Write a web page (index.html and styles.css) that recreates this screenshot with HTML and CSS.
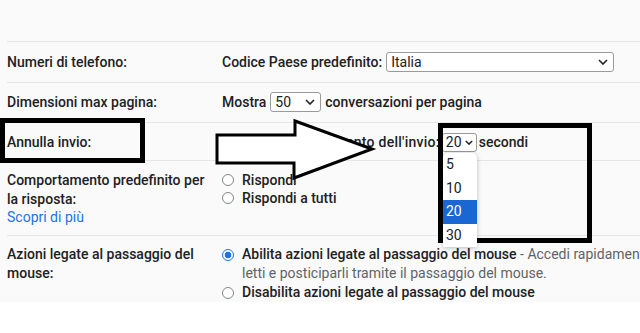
FILE: index.html
```html
<!DOCTYPE html>
<html lang="it">
<head>
<meta charset="UTF-8">
<meta name="viewport" content="width=device-width, initial-scale=1.0">
<title>Impostazioni</title>
<link rel="stylesheet" href="styles.css">
</head>
<body>

<div class="page">
    <div class="settings">
        <div class="row row-1">
            <div class="label">Numeri di telefono:</div>
            <div class="value inline">
                <span class="strong">Codice Paese predefinito:</span>
                <span class="select select-country">Italia
                    <svg class="chevron" width="10" height="6" viewBox="0 0 10 6"><path d="M1 1l4 4 4-4" fill="none" stroke="#202124" stroke-width="1.6"/></svg>
                </span>
            </div>
        </div>

        <div class="row row-2">
            <div class="label">Dimensioni max pagina:</div>
            <div class="value inline">
                <span class="strong">Mostra</span>
                <span class="select select-size">50
                    <svg class="chevron" width="10" height="6" viewBox="0 0 10 6"><path d="M1 1l4 4 4-4" fill="none" stroke="#202124" stroke-width="1.6"/></svg>
                </span>
                <span class="strong">conversazioni per pagina</span>
            </div>
        </div>

        <div class="row row-3">
            <div class="label">Annulla invio:</div>
            <div class="value inline tight">
                <span class="strong wide">Tempo di annullamento dell'invio:</span>
                <span class="select select-delay">20
                    <svg class="chevron" width="8" height="5" viewBox="0 0 10 6"><path d="M1 1l4 4 4-4" fill="none" stroke="#202124" stroke-width="1.8"/></svg>
                </span>
                <span class="strong">secondi</span>
            </div>
        </div>

        <div class="row row-4">
            <div class="label">
                Comportamento predefinito per la risposta:
                <a class="link" href="#">Scopri di più</a>
            </div>
            <div class="value">
                <div class="option"><span class="radio"></span><span class="strong">Rispondi</span></div>
                <div class="option"><span class="radio"></span><span class="strong">Rispondi a tutti</span></div>
            </div>
        </div>

        <div class="row row-5">
            <div class="label">Azioni legate al passaggio del mouse:</div>
            <div class="value">
                <div class="option">
                    <span class="radio checked"></span>
                    <span><span class="strong">Abilita azioni legate al passaggio del mouse</span><span class="desc"> - Accedi rapidamente ai controlli di archiviazione, eliminazione, segna come<br>letti e posticiparli tramite il passaggio del mouse.</span></span>
                </div>
                <div class="option"><span class="radio"></span><span class="strong">Disabilita azioni legate al passaggio del mouse</span></div>
            </div>
        </div>
    </div>

    <!-- annotazioni -->
    <div class="mark mark-label"></div>
    <div class="mark mark-menu"></div>
    <svg class="arrow" width="640" height="333" viewBox="0 0 640 333">
        <polygon points="217,135 295,135 295,121 372,149 294,178 294,163 217,163" fill="#fff" stroke="#000" stroke-width="3"/>
    </svg>

    <!-- menu aperto del selettore secondi -->
    <ul class="menu">
        <li>5</li>
        <li>10</li>
        <li class="active">20</li>
        <li>30</li>
    </ul>
</div>

</body>
</html>
```

FILE: styles.css
```css
body {
    margin: 0;
    background-color: #ffffff;
    font-family: Roboto, "Liberation Sans", Arial, sans-serif;
    font-size: 14px;
    color: #202124;
    overflow: hidden;
}
.page {
    position: relative;
    width: 640px;
    height: 333px;
    overflow: hidden;
}
.settings {
    background-color: #fafafa;
    padding-top: 41px;
}
.row {
    display: flex;
    margin-left: 7px;
    border-top: 1px solid #e6e6e6;
    line-height: 18px;
}
.row-1 { padding: 11px 0 11px; }
.row-2 { padding: 10px 0 11px; }
.row-3 { padding: 10px 0 9px; }
.row-4 { padding: 10px 0 10px; }
.row-5 { padding: 9px 0 0; line-height: 19px; }
.row-4 .label { line-height: 19px; }
.label {
    width: 206px;
    flex: none;
    margin-right: 9px;
    font-weight: 500;
}
.value {
    flex: 1;
    white-space: nowrap;
}
.inline {
    display: flex;
    align-items: center;
    gap: 4px;
    height: 18px;
}
.inline.tight {
    gap: 2px;
}
.strong {
    font-weight: 500;
}
.wide {
    letter-spacing: 0.26px;
}
.link {
    display: block;
    color: #1a73e8;
    font-weight: 400;
    text-decoration: none;
    line-height: 16px;
}
.select {
    display: inline-flex;
    align-items: center;
    justify-content: space-between;
    flex: none;
    box-sizing: border-box;
    height: 20px;
    padding: 0 5px 0 4px;
    border: 1px solid #9a9a9a;
    border-radius: 3px;
    background-color: #ffffff;
    font-weight: 400;
}
.select-country { width: 228px; }
.select-size { width: 51px; }
.select-delay {
    width: 35px;
    height: 19px;
    padding: 0 3px;
}
.chevron {
    flex: none;
}
.menu {
    position: absolute;
    top: 153px;
    left: 443px;
    z-index: 12;
    width: 34px;
    margin: 0;
    padding: 0;
    list-style: none;
    background-color: #ffffff;
    border-radius: 5px 5px 0 0;
    box-shadow: 0 1px 5px rgba(0, 0, 0, 0.25);
}
.menu li {
    height: 23.5px;
    line-height: 23.5px;
    padding-left: 3px;
    font-size: 14px;
}
.menu li.active {
    background-color: #1a66d2;
    color: #ffffff;
}
.option {
    display: flex;
    align-items: flex-start;
}
.radio {
    flex: none;
    box-sizing: border-box;
    width: 12px;
    height: 12px;
    margin: 3px 8px 0 0;
    border: 1px solid #80868b;
    border-radius: 50%;
    background-color: #ffffff;
}
.row-5 .radio {
    margin-top: 4px;
}
.radio.checked {
    border: 1.5px solid #1a73e8;
    background: radial-gradient(circle, #1a73e8 0 3.2px, #ffffff 3.6px);
}
.desc {
    color: #5f6368;
    font-weight: 400;
}
.mark {
    position: absolute;
    z-index: 10;
    border: 5px solid #000000;
    box-sizing: border-box;
}
.mark-label {
    left: 0;
    top: 118px;
    width: 145px;
    height: 45px;
}
.mark-menu {
    left: 438px;
    top: 123px;
    width: 154px;
    height: 120px;
}
.arrow {
    position: absolute;
    left: 0;
    top: 0;
    z-index: 11;
    pointer-events: none;
}
```
